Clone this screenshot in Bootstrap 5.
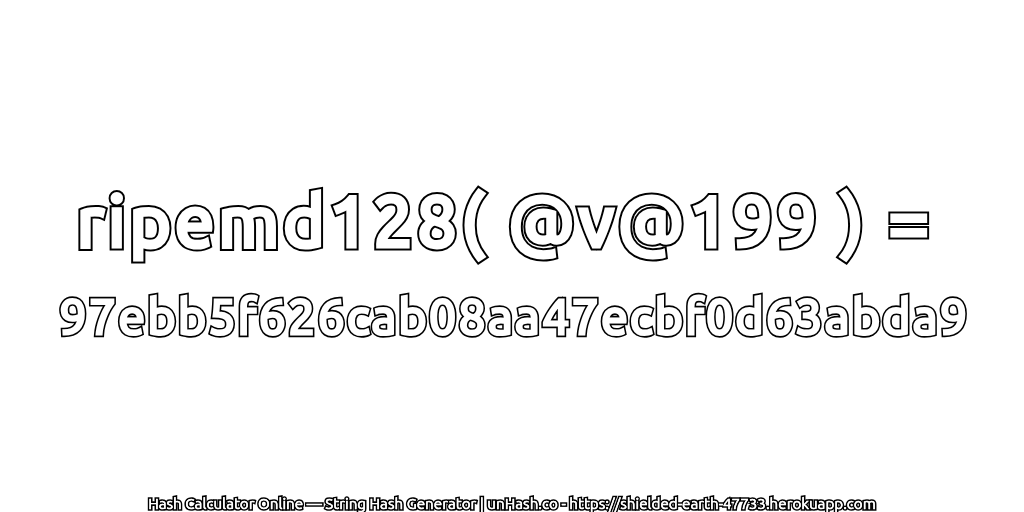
<!DOCTYPE html>
<html lang="en"><head><meta charset="utf-8">
<link href="https://cdn.jsdelivr.net/npm/bootstrap@5.3.0/dist/css/bootstrap.min.css" rel="stylesheet">
<style>
html,body{height:512px;margin:0;background:#fff;overflow:hidden}
.stage{height:512px;font-family:"Ubuntu","Noto Sans","DejaVu Sans",sans-serif;color:#fff}
.main-block{padding-top:170px}
.outlined{position:relative;white-space:nowrap;paint-order:stroke fill;will-change:opacity;opacity:.999}
.outlined::after{content:attr(data-t);position:absolute;top:0;color:#fff;paint-order:stroke fill}
.hero-line{font-size:70px;letter-spacing:4.6px;line-height:100px;-webkit-text-stroke:9px #000;margin-right:14px}
.hero-line::after{left:0;-webkit-text-stroke:5px #fff}
.hash-line{font-size:48px;letter-spacing:2.4px;line-height:93px;-webkit-text-stroke:6.4px #000;margin-left:5px}
.hash-line::after{left:0;-webkit-text-stroke:3.2px #fff}
.foot-line{font-size:15.2px;line-height:16px;-webkit-text-stroke:3.6px #000}
.foot-line::after{left:0;-webkit-text-stroke:.4px #fff}
</style></head><body>
<div class="stage d-flex flex-column align-items-center">
<div class="main-block flex-grow-1 d-flex flex-column align-items-center">
<div class="outlined hero-line" data-t="ripemd128( @v@199 ) =">ripemd128( @v@199 ) =</div>
<div class="outlined hash-line" data-t="97ebb5f626cab08aa47ecbf0d63abda9">97ebb5f626cab08aa47ecbf0d63abda9</div>
</div>
<div class="outlined foot-line" data-t="Hash Calculator Online — String Hash Generator | unHash.co - https://shielded-earth-47733.herokuapp.com">Hash Calculator Online — String Hash Generator | unHash.co - https://shielded-earth-47733.herokuapp.com</div>
</div>
<script src="https://cdn.jsdelivr.net/npm/bootstrap@5.3.0/dist/js/bootstrap.bundle.min.js"></script>
</body></html>
